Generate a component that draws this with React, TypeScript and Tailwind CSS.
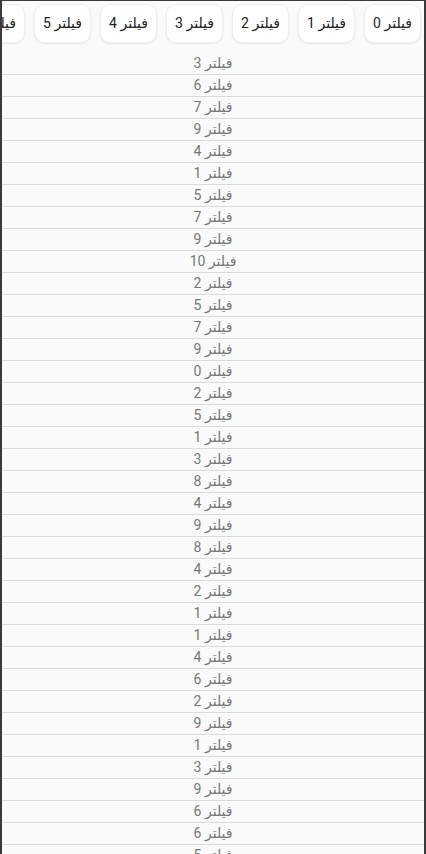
import React from "react";

const chips = [0, 1, 2, 3, 4, 5, 6, 7, 8];
const rows = [3, 6, 7, 9, 4, 1, 5, 7, 9, 10, 2, 5, 7, 9, 0, 2, 5, 1, 3, 8, 4, 9, 8, 4, 2, 1, 1, 4, 6, 2, 9, 1, 3, 9, 6, 6, 5, 3, 2];

export default function App() {
  return (
    <div
      dir="rtl"
      className="h-[854px] w-[426px] overflow-hidden border-l-2 border-r-2 border-t border-[#3a3a3a] bg-[#fafafa]"
      style={{ fontFamily: "Roboto, 'DejaVu Sans', 'Noto Sans', sans-serif" }}
    >
      <div className="flex h-[52px] gap-[9px] overflow-hidden pr-[3px] pt-[3px]">
        {chips.map((c) => (
          <div
            key={c}
            className="flex h-[39px] w-[57px] shrink-0 items-center justify-center rounded-[10px] border border-[#eeeeee] bg-white text-[14px] text-[#222] shadow-[0_1px_2px_rgba(0,0,0,0.08)]"
          >
            {`فیلتر ${c}`}
          </div>
        ))}
      </div>
      <div className="flex flex-col">
        {rows.map((r, i) => (
          <div
            key={i}
            className="flex h-[22px] shrink-0 items-center justify-center border-b border-[#dcdcdc] text-[14px] text-[#777]"
          >
            {`فیلتر ${r}`}
          </div>
        ))}
      </div>
    </div>
  );
}
